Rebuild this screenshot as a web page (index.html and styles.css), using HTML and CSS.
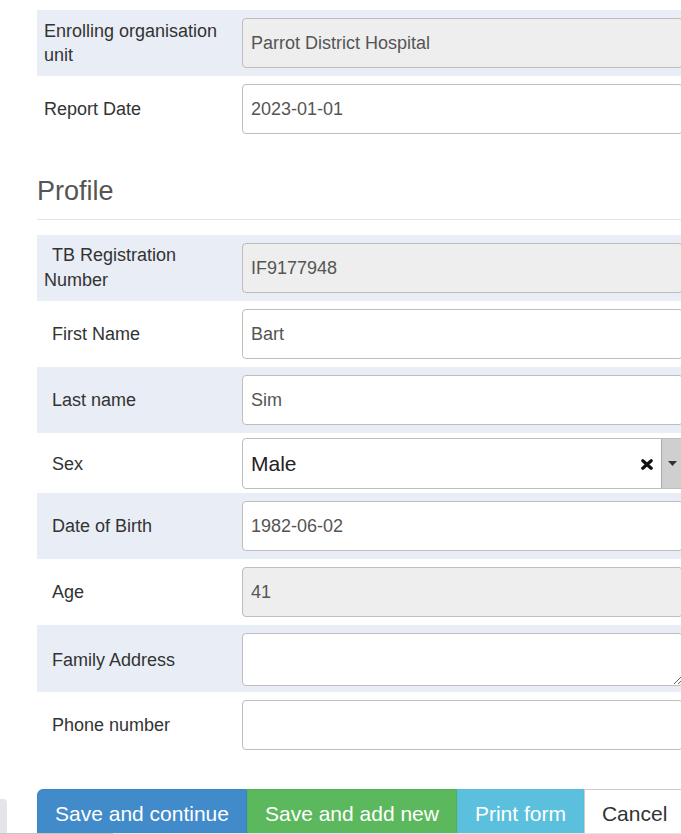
FILE: index.html
```html
<!DOCTYPE html>
<html>
<head>
<meta charset="utf-8">
<link rel="stylesheet" href="styles.css">
</head>
<body>
<div class="page">
  <div class="row shaded">
    <label class="lbl">Enrolling organisation unit</label>
    <div class="field"><input class="ctl" readonly value="Parrot District Hospital"></div>
  </div>
  <div class="row">
    <label class="lbl">Report Date</label>
    <div class="field"><input class="ctl white" value="2023-01-01"></div>
  </div>

  <h3 class="section">Profile</h3>

  <div class="row shaded">
    <label class="lbl indent">TB Registration Number</label>
    <div class="field"><input class="ctl" readonly value="IF9177948"></div>
  </div>
  <div class="row">
    <label class="lbl wide">First Name</label>
    <div class="field"><input class="ctl white" value="Bart"></div>
  </div>
  <div class="row shaded">
    <label class="lbl wide">Last name</label>
    <div class="field"><input class="ctl white" value="Sim"></div>
  </div>
  <div class="row sel-row">
    <label class="lbl wide">Sex</label>
    <div class="field">
      <div class="select2">
        <span class="sel-text">Male</span>
        <svg class="clear" width="12" height="11" viewBox="0 0 12 11"><path d="M1.8 1.8 L10.2 9.2 M10.2 1.8 L1.8 9.2" stroke="#111" stroke-width="3.2" stroke-linecap="round"/></svg>
        <span class="arrow"><svg width="9" height="5" viewBox="0 0 9 5"><path d="M0 0 H9 L4.5 5 Z" fill="#333"/></svg></span>
      </div>
    </div>
  </div>
  <div class="row shaded">
    <label class="lbl wide">Date of Birth</label>
    <div class="field"><input class="ctl white" value="1982-06-02"></div>
  </div>
  <div class="row">
    <label class="lbl wide">Age</label>
    <div class="field"><input class="ctl" readonly value="41"></div>
  </div>
  <div class="row shaded ta-row">
    <label class="lbl wide">Family Address</label>
    <div class="field"><textarea class="ctl white ta"></textarea></div>
  </div>
  <div class="row">
    <label class="lbl wide">Phone number</label>
    <div class="field"><input class="ctl white" value=""></div>
  </div>

  <div class="actions">
    <button class="btn primary">Save and continue</button>
    <button class="btn success">Save and add new</button>
    <button class="btn info">Print form</button>
    <button class="btn plain">Cancel</button>
  </div>
</div>
<div class="side-tab"></div>
<div class="bottom-line"></div>
</body>
</html>
```

FILE: styles.css
```css
html, body {
  margin: 0;
  padding: 0;
  overflow: hidden;
  background: #fff;
}
body {
  font-family: "Liberation Sans", Arial, sans-serif;
  color: #333;
}
.page {
  width: 660px;
  padding: 10px 0 0 37px;
}
.row {
  display: grid;
  grid-template-columns: 205px 1fr;
  align-items: center;
  padding: 8px 14px 8px 0;
}
.shaded {
  background: #e9eef6;
}
.sel-row {
  padding-top: 5px;
  padding-bottom: 4px;
}
.ta-row {
  padding-bottom: 6px;
}
.lbl {
  font-size: 18px;
  line-height: 24px;
  padding: 0 8px 0 7px;
  color: #333;
}
.lbl.wide {
  padding-left: 15px;
}
.lbl.indent {
  text-indent: 8px;
  line-height: 25px;
}
.field {
  min-width: 0;
}
.ctl {
  display: block;
  box-sizing: border-box;
  width: 100%;
  height: 50px;
  margin: 0;
  padding: 0 8px;
  border: 1px solid #bdbdbd;
  border-radius: 4px;
  background: #eee;
  font-family: "Liberation Sans", Arial, sans-serif;
  font-size: 18px;
  color: #555;
  outline: none;
}
.ctl.white {
  background: #fff;
}
.ta {
  height: 53px;
  padding: 6px 8px;
}
.select2 {
  box-sizing: border-box;
  height: 51px;
  display: flex;
  align-items: center;
  border: 1px solid #bdbdbd;
  border-radius: 4px 0 0 4px;
  background: #fff;
  overflow: hidden;
}
.sel-text {
  flex: 1;
  padding-left: 8px;
  font-size: 21px;
  color: #222;
}
.clear {
  margin-right: 8px;
  margin-top: 1px;
}
.arrow {
  align-self: stretch;
  width: 20px;
  display: flex;
  align-items: center;
  justify-content: center;
  background: #cfcfcf;
  border-left: 1px solid #aaa;
}
.section {
  margin: 34px 0 15px 0;
  padding-bottom: 13px;
  border-bottom: 1px solid #e5e5e5;
  font-size: 27px;
  line-height: 30px;
  font-weight: normal;
  color: #555;
}
.actions {
  display: flex;
  margin-top: 31px;
}
.btn {
  font-family: "Liberation Sans", Arial, sans-serif;
  font-size: 21px;
  line-height: 28px;
  padding: 10px 17px 14px 17px;
  border: 1px solid transparent;
  border-radius: 0;
  color: #fff;
  white-space: nowrap;
  cursor: pointer;
}
.primary {
  background: #428bca;
  border-color: #3d84c4;
  border-radius: 6px 0 0 6px;
}
.success {
  background: #5cb85c;
  border-color: #55b255;
}
.info {
  background: #5bc0de;
  border-color: #55bcdb;
}
.plain {
  background: #fff;
  border-color: #ccc;
  color: #333;
}
.side-tab {
  position: fixed;
  left: 0;
  bottom: 0;
  width: 7px;
  height: 35px;
  background: #e3e5e8;
  border-top-right-radius: 4px;
}
.bottom-line {
  position: fixed;
  left: 0;
  right: 0;
  bottom: 0;
  height: 1px;
  background: linear-gradient(to right, #c4c6c9 0, #c4c6c9 113px, #e4e6e9 113px);
}
```
